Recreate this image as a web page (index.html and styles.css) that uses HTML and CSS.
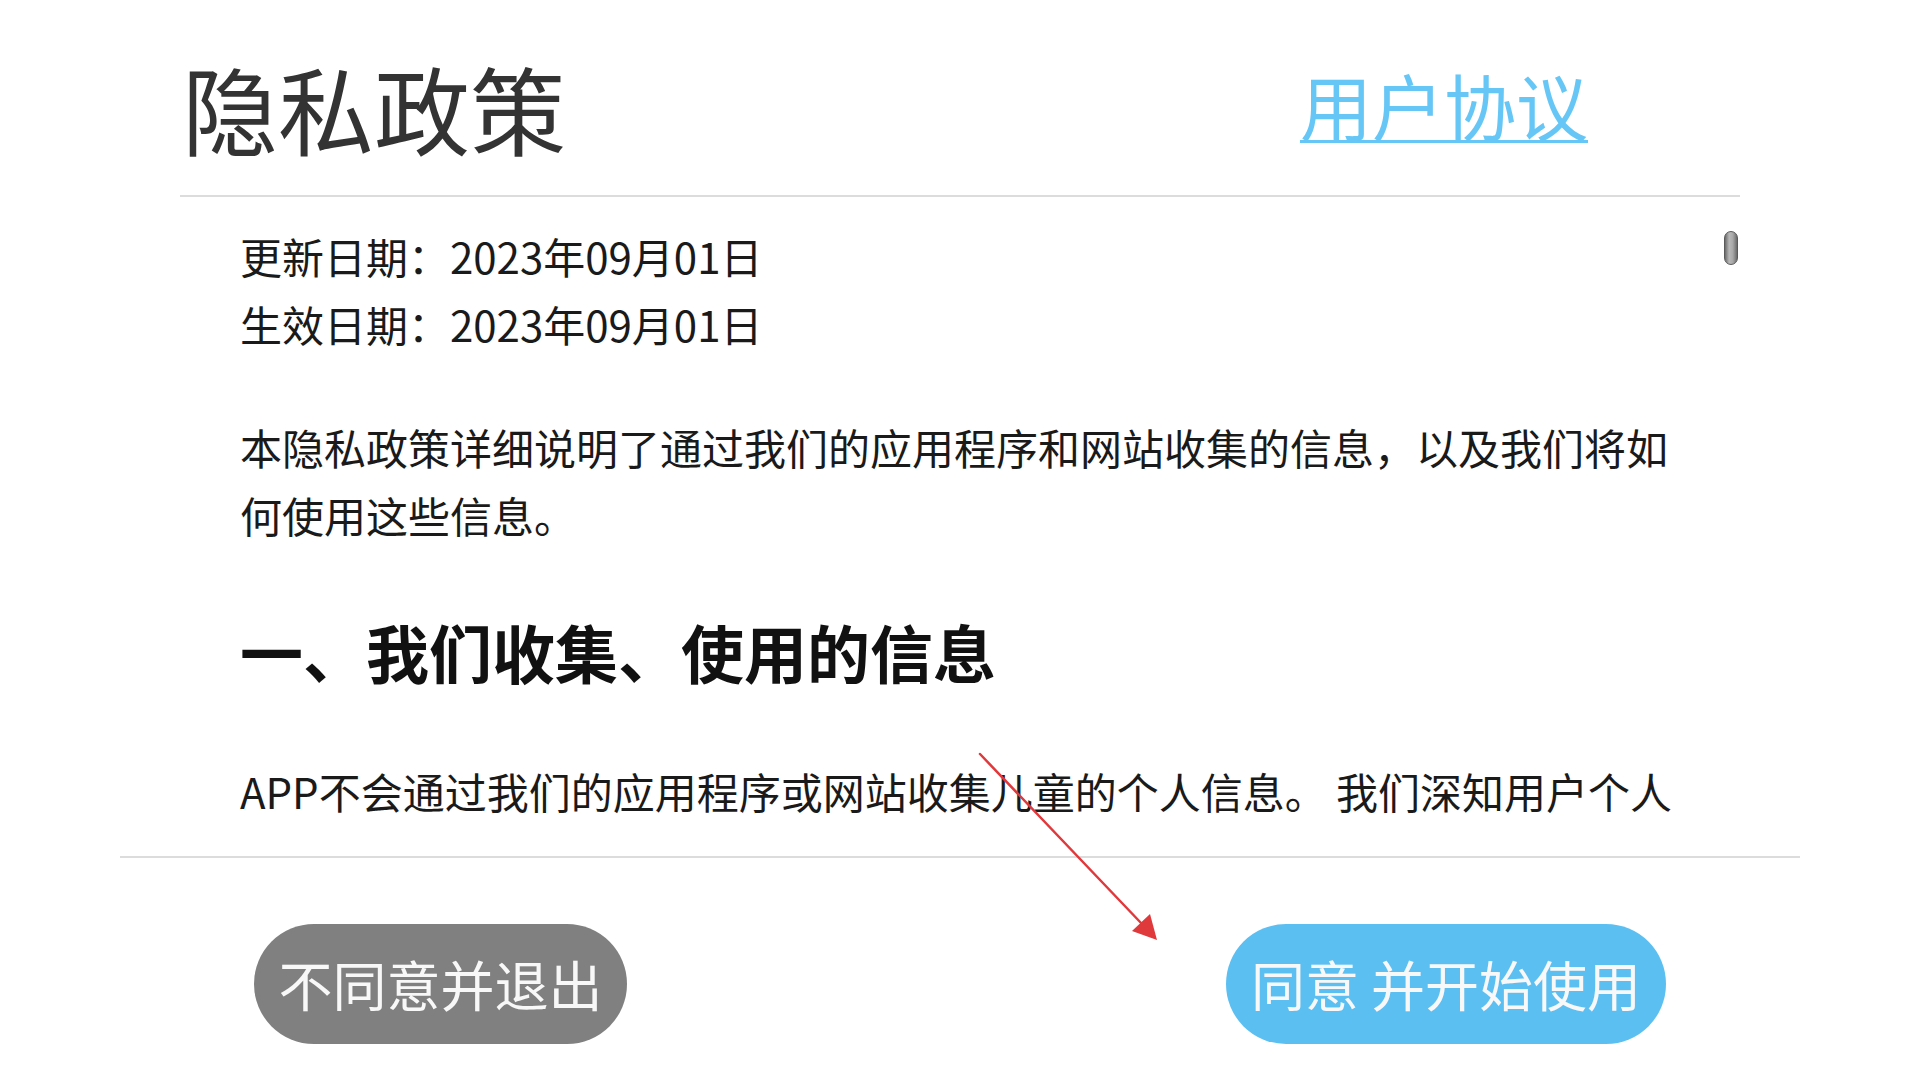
FILE: index.html
```html
<!DOCTYPE html>
<html lang="zh-CN">
<head>
<meta charset="utf-8">
<title>隐私政策</title>
<link rel="stylesheet" href="styles.css">
</head>
<body>
<div class="page">
  <header class="top">
    <h1 class="title">隐私政策</h1>
    <a class="link" href="#">用户协议</a>
  </header>
  <main class="content">
    <div class="scroll">
      <p class="date">更新日期：2023年09月01日</p>
      <p class="date">生效日期：2023年09月01日</p>
      <p class="intro">本隐私政策详细说明了通过我们的应用程序和网站收集的信息，以及我们将如何使用这些信息。</p>
      <h2 class="section">一、我们收集、使用的信息</h2>
      <p class="text">APP不会通过我们的应用程序或网站收集儿童的个人信息。 我们深知用户个人</p>
    </div>
    <div class="thumb"></div>
  </main>
  <footer class="actions">
    <button class="btn btn-decline">不同意并退出</button>
    <button class="btn btn-accept">同意 并开始使用</button>
  </footer>
  <svg class="arrow" width="1920" height="1080" viewBox="0 0 1920 1080" aria-hidden="true">
    <line x1="980" y1="754" x2="1142" y2="924" stroke="#e0393c" stroke-width="2.5" stroke-linecap="round"/>
    <polygon points="1157,940 1132,931 1150,914" fill="#e0393c"/>
  </svg>
</div>
</body>
</html>
```

FILE: styles.css
```css
html, body {
  margin: 0;
  padding: 0;
  background: #ffffff;
}

body {
  font-family: "Noto Sans CJK SC", "Noto Sans", sans-serif;
  color: #1a1a1a;
  width: 1920px;
  height: 1080px;
  overflow: hidden;
}

.page {
  position: relative;
  width: 1920px;
  height: 1080px;
}

.top {
  box-sizing: border-box;
  height: 197px;
  margin: 0 180px;
  padding: 59px 152px 0 2px;
  display: flex;
  justify-content: space-between;
  align-items: flex-start;
  border-bottom: 2px solid #dcdcdc;
}

.title {
  margin: 0;
  font-size: 96px;
  line-height: 96px;
  font-weight: 400;
  color: #333333;
}

.link {
  margin-top: 9px;
  font-size: 72px;
  line-height: 72px;
  color: #66c6f6;
  text-decoration: underline;
  text-decoration-thickness: 3px;
  text-underline-offset: 5px;
}

.content {
  position: relative;
  box-sizing: border-box;
  height: 659px;
  margin: 0 180px;
  padding: 25px 62px 0 60px;
  overflow: hidden;
}

.scroll {
  height: 612px;
  overflow: hidden;
}

.date {
  margin: 0;
  font-size: 42px;
  line-height: 68px;
}

.intro {
  margin: 55px 0 0;
  font-size: 42px;
  line-height: 68px;
}

.section {
  margin: 62px 0 0;
  font-size: 63px;
  line-height: 80px;
  font-weight: 700;
  color: #111111;
}

.text {
  margin: 66px 0 0;
  font-size: 42px;
  line-height: 68px;
}

.thumb {
  position: absolute;
  top: 34px;
  right: 2px;
  box-sizing: border-box;
  width: 14px;
  height: 34px;
  border-radius: 7px;
  border: 1px solid #5a5a5a;
  background: linear-gradient(to right, #6a6a6a, #b8b8b8 35%, #a8a8a8 65%, #6a6a6a);
}

.actions {
  margin: 0 120px;
  padding: 66px 134px 0;
  border-top: 2px solid #dcdcdc;
  display: flex;
  justify-content: space-between;
}

.btn {
  height: 120px;
  border: none;
  border-radius: 60px;
  padding: 0;
  font-family: "Noto Sans CJK SC", "Noto Sans", sans-serif;
  font-size: 54px;
  line-height: 120px;
  color: #f8f8f8;
  text-align: center;
  cursor: pointer;
}

.btn-decline {
  width: 373px;
  background: #808080;
}

.btn-accept {
  width: 440px;
  background: #5cbff2;
}

.arrow {
  position: absolute;
  left: 0;
  top: 0;
  pointer-events: none;
}
```
